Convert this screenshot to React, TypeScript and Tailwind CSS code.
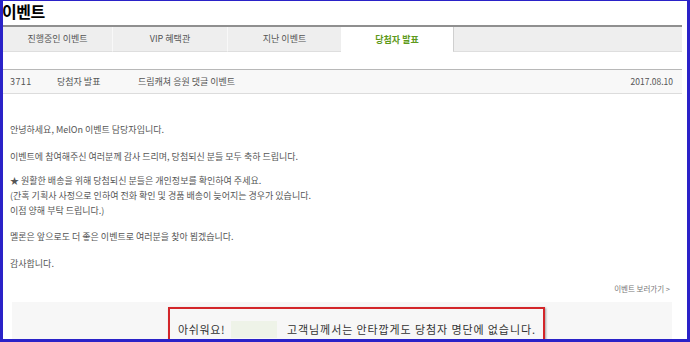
import React from "react";

const F = { fontFamily: '"Noto Sans CJK KR", "Noto Sans", sans-serif' };

export default function App() {
  return (
    <div
      className="w-[690px] h-[342px] overflow-hidden bg-white border-l-[3px] border-r-[3px] border-b-[3px] border-t border-[#2a22c8] relative"
      style={F}
    >
      <div className="w-[679px]">
        {/* title */}
        <div className="h-[24px] text-[16px] font-bold leading-[21px] text-black tracking-[-0.5px] -ml-[1px]">이벤트</div>
        {/* tabs */}
        <div className="flex border-t-2 border-[#8f8f8f] h-[27px] text-[9px] text-[#555]">
          <div className="w-[110px] bg-[#eeeeee] border-b border-[#dedede] border-r border-r-[#f8f8f8] flex items-center justify-center">진행중인 이벤트</div>
          <div className="w-[115px] bg-[#eeeeee] border-b border-[#dedede] border-r border-r-[#f8f8f8] flex items-center justify-center">VIP 혜택관</div>
          <div className="w-[113px] bg-[#eeeeee] border-b border-[#dedede] flex items-center justify-center">지난 이벤트</div>
          <div className="w-[112px] bg-white flex items-center justify-center text-[#5e9a1c] font-bold">당첨자 발표</div>
          <div className="flex-1 bg-[#eeeeee] border-b border-[#dedede] border-l border-l-[#cfcfcf]"></div>
        </div>
        {/* row */}
        <div className="mt-[17px] h-[25px] bg-[#f8f8f8] border-t border-[#b8b8b8] border-b border-b-[#dcdcdc] flex items-center text-[9px] text-[#555]">
          <div className="w-[54px] pl-[7px] tracking-[0.4px]">3711</div>
          <div className="w-[81px]">당첨자 발표</div>
          <div className="flex-1">드림캐쳐 응원 댓글 이벤트</div>
          <div className="pr-[9px] text-[8.5px]">2017.08.10</div>
        </div>
        {/* body */}
        <div className="pl-[7px] pt-[28px] text-[9px] leading-[15px] text-[#555]">
          <p className="mb-[12px]">안녕하세요, MelOn 이벤트 담당자입니다.</p>
          <p className="mb-[9px]">이벤트에 참여해주신 여러분께 감사 드리며, 당첨되신 분들 모두 축하 드립니다.</p>
          <p className="mb-[11px]">
            ★ 원활한 배송을 위해 당첨되신 분들은 개인정보를 확인하여 주세요.
            <br />
            (간혹 기획사 사정으로 인하여 전화 확인 및 경품 배송이 늦어지는 경우가 있습니다.
            <br />
            이점 양해 부탁 드립니다.)
          </p>
          <p className="mb-[12px]">멜론은 앞으로도 더 좋은 이벤트로 여러분을 찾아 뵙겠습니다.</p>
          <p>감사합니다.</p>
        </div>
        <div className="flex justify-end pr-[12px] mt-[13px] text-[7.5px] leading-[10px] text-[#777]">
          이벤트 보러가기 &gt;
        </div>
        {/* bottom box */}
        <div className="mt-[8px] ml-[9px] w-[660px] h-[50px] bg-[#f7f7f7] pt-[5px]">
          <div className="ml-[156px] w-[377px] h-[40px] border-2 border-[#d3262a] shadow-[1px_1px_2px_rgba(0,0,0,0.35)] pl-[8px] pt-[12px] flex items-start text-[11px] leading-[16px] text-[#333]">
            <span className="tracking-[0.6px]">아쉬워요!</span>
            <span className="ml-[6px] w-[46px] h-[17px] bg-[#eef3e8]"></span>
            <span className="ml-[10px] tracking-[0.9px]">고객님께서는 안타깝게도 당첨자 명단에 없습니다.</span>
          </div>
        </div>
      </div>
    </div>
  );
}
